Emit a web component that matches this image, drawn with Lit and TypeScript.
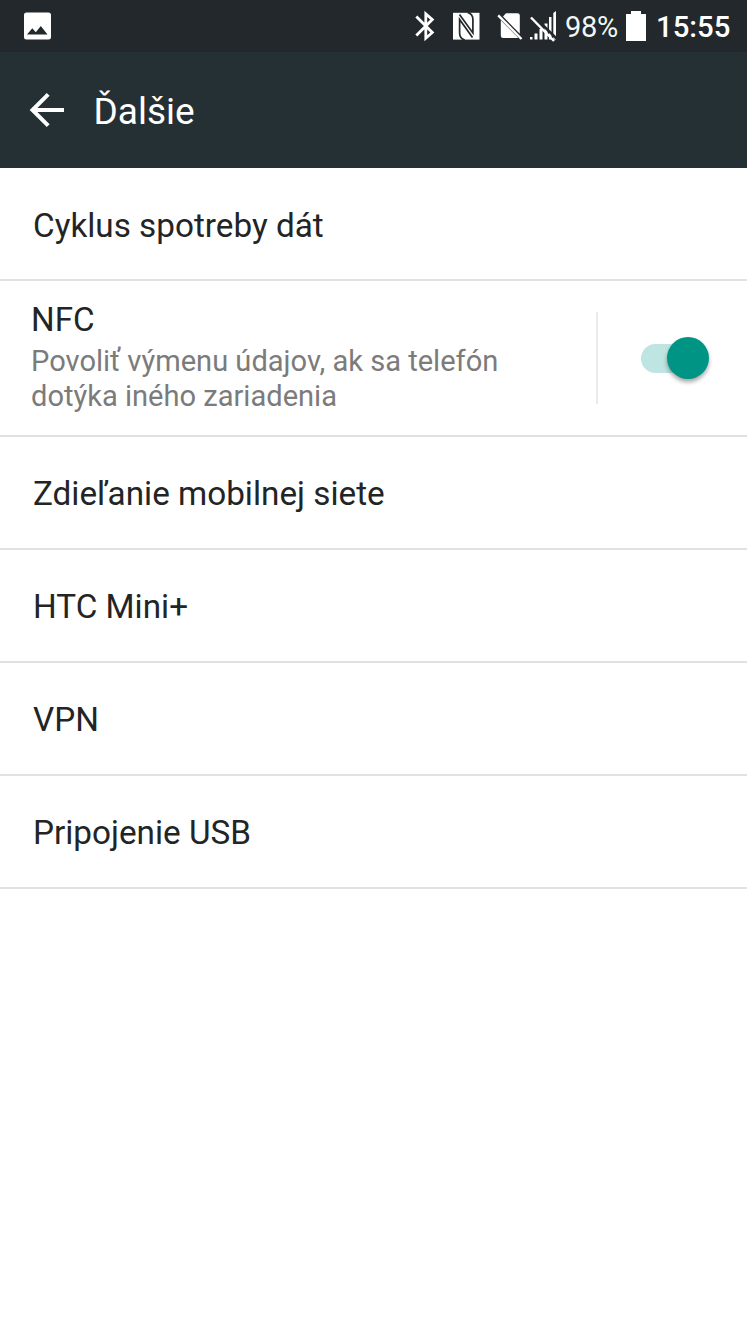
import { LitElement, html, css } from "lit";
import { customElement, state } from "lit/decorators.js";

@customElement("status-bar")
class StatusBar extends LitElement {
  static styles = css`
    :host { display: flex; justify-content: space-between; height: 52px; background: #22282b; color: #fff; }
    svg { display: block; }
    .right { display: flex; }
    .percent, .clock { line-height: 55px; white-space: nowrap; }
    .percent { width: 61px; font-size: 29px; letter-spacing: -0.300px; color: #f4f5f5; }
    .clock { width: 91px; font-size: 29.300px; font-weight: 500; letter-spacing: 0; }
    .battery { width: 30px; }
  `;
  render() {
    return html`
      <svg width="60" height="52" viewBox="0 0 60 52">
        <path fill="#fff" fill-rule="evenodd" d="M26.5 12.5h22a2.5 2.5 0 0 1 2.5 2.5v22a2.5 2.5 0 0 1-2.500 2.500h-22a2.500 2.500 0 0 1-2.500-2.500v-22a2.500 2.500 0 0 1 2.500-2.500zM27 34.600h20.500l-6.700-8.600-5 6.300-3.500-4.100z" />
      </svg>
      <div class="right">
        <svg width="160" height="52" viewBox="405 0 160 52">
          <path fill="none" stroke="#fff" stroke-width="2.800" d="M416.300 16.500L432.300 32.500L425.800 38.200V13.800L432.300 19.600L416.300 35.500" />
          <path fill="#fff" d="M453 12.800H479.500V39.600H453z" />
          <path fill="none" stroke="#22282b" stroke-width="1.700" d="M464.800 40Q459.600 38.500 459.600 33V19.500L472.500 37.500M467.700 12.500Q472.900 14 472.900 19.500V33L459.500 14.500" />
          <path fill="#fff" d="M506 13.300h11.500q2.300 0 2.300 2.300v18.200L503 16.500zM500.800 20.300L518 37.500q-.5.500-1.500.5h-13.400q-2.300 0-2.300-2.300z" />
          <path fill="none" stroke="#fff" stroke-width="2.400" d="M498.200 15.300L521.500 39" />
          <path fill="#fff" d="M530 39.500v-2.500h2.500v2.500zM534.500 39.500v-6h3v6zM539.500 39.500V29h3v10.500zM544.500 39.500V23.500h3v16zM549 39.500V17h2.500v22.500zM553.300 39.500V13l2.700-2v28.500z" />
          <path stroke="#22282b" stroke-width="2.500" d="M533 15.500L556.500 38.500" />
          <path stroke="#fff" stroke-width="2.500" d="M531 17.500L554 41" />
        </svg>
        <div class="percent">98%</div>
        <svg class="battery" width="30" height="52" viewBox="626 0 30 52">
          <path fill="#fff" d="M631 11h10v3h5v27h-20V14h5z" />
        </svg>
        <div class="clock">15:55</div>
      </div>
    `;
  }
}

@customElement("title-bar")
class TitleBar extends LitElement {
  static styles = css`
    :host { display: flex; height: 115.500px; background: #253035; color: #fff; }
    .back { display: block; width: 93.500px; height: 115px; }
    .title { font-size: 37px; line-height: 120px; }
  `;
  render() {
    return html`
      <svg class="back" viewBox="0 52 93.500 115">
        <path fill="none" stroke="#fff" stroke-width="4" d="M48.200 94.300L32.500 110L48.200 125.700M32.500 110H64" />
      </svg>
      <div class="title">Ďalšie</div>
    `;
  }
}

@customElement("app-root")
class AppRoot extends LitElement {
  static styles = css`
    :host { display: flex; flex-direction: column; width: 747px; height: 1328px; background: #fff; font-family: Roboto, sans-serif; color: #232425; overflow: hidden; }
    .list { display: flex; flex-direction: column; }
    .row { box-sizing: border-box; height: 113px; padding-left: 33px; border-bottom: 2px solid #e1e1e1; font-size: 33.280px; line-height: 114px; }
    .first { height: 113.500px; line-height: 115px; }
    .nfc { display: flex; box-sizing: border-box; height: 156px; border-bottom: 2px solid #e1e1e1; }
    .text { width: 565px; padding: 19px 0 0 31px; }
    .name { font-size: 33.200px; line-height: 40px; }
    .summary { margin-top: 4px; font-size: 29.070px; line-height: 34.500px; color: #7b7b7b; }
    .divider { width: 2px; height: 92px; margin-top: 31px; background: #ebebeb; }
    .toggle { width: 68px; height: 42px; margin: 56px 0 0 43px; display: flex; align-items: center; border: 0; padding: 0; background: none; }
    .track { width: 60px; height: 29px; border-radius: 15px; background: #bee5e1; }
    .thumb { flex: none; width: 42px; height: 42px; margin-left: -34px; border-radius: 50%; background: #009485; box-shadow: 0 3px 4px rgba(0, 0, 0, 0.35); }
  `;
  @state() private enabled = true;
  private rows = ["Zdieľanie mobilnej siete", "HTC Mini+", "VPN", "Pripojenie USB"];
  render() {
    return html`
      <status-bar></status-bar>
      <title-bar></title-bar>
      <div class="list">
        <div class="row first">Cyklus spotreby dát</div>
        <div class="nfc">
          <div class="text">
            <div class="name">NFC</div>
            <div class="summary">Povoliť výmenu údajov, ak sa telefón<br />dotýka iného zariadenia</div>
          </div>
          <div class="divider"></div>
          <button class="toggle" role="switch" aria-checked=${this.enabled}>
            <span class="track"></span><span class="thumb"></span>
          </button>
        </div>
        ${this.rows.map((r) => html`<div class="row">${r}</div>`)}
      </div>
    `;
  }
}
